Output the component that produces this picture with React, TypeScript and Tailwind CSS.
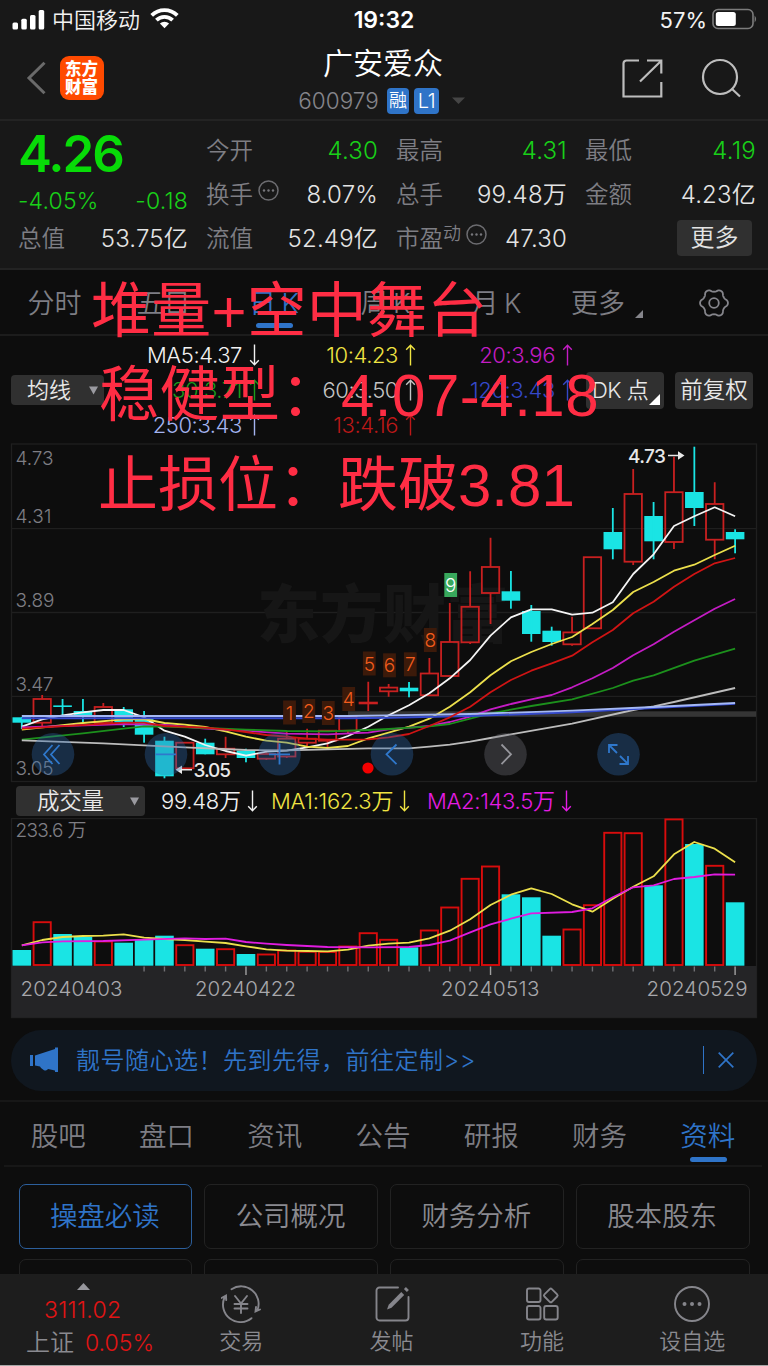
import React from "react";

type Row = [number, number, number, number, number];

/* kind (1 rise, 0 fall), body top, body bottom, wick top, wick bottom */
const candles: Row[] = [
  [0, 717.3, 722.7, 717, 729],
  [1, 699, 722.7, 695, 726],
  [0, 705.4, 707, 699, 717],
  [0, 711, 717, 699, 722.7],
  [1, 707, 723, 703, 723],
  [0, 709.3, 722.3, 707, 727],
  [0, 718, 734.7, 711, 742.7],
  [0, 740.7, 776.3, 736.7, 778.3],
  [1, 742.7, 768.3, 742.7, 768.3],
  [0, 742.7, 754.3, 738.7, 754.3],
  [1, 748.7, 754.3, 736.7, 758],
  [0, 750.7, 758, 748.7, 762.3],
  [1, 754, 758.7, 752, 760],
  [1, 738.7, 756.5, 730.7, 758],
  [1, 738.7, 742.7, 728.7, 747.3],
  [1, 730.7, 740.7, 730.7, 747],
  [1, 716.7, 730.7, 716.7, 733],
  [1, 702.6, 703.4, 681.7, 711],
  [1, 687.6, 691.3, 684, 696.7],
  [0, 687.7, 691.3, 682, 697.3],
  [1, 673.5, 695.3, 658, 695],
  [1, 642, 676, 603, 676],
  [1, 606.8, 642.3, 571.3, 644],
  [1, 567, 593, 537.7, 624],
  [0, 591.3, 600.7, 571, 608.7],
  [0, 611, 634, 605, 641.7],
  [0, 630.7, 642, 626.7, 645.7],
  [1, 632.4, 644.3, 616.7, 645.7],
  [1, 557.2, 628.3, 557.2, 628.3],
  [0, 532, 549.3, 508, 559.3],
  [1, 494, 561.7, 469, 565],
  [0, 516, 541.3, 502, 559.3],
  [1, 492.2, 542, 456.7, 549],
  [0, 492, 508, 446.7, 526],
  [1, 504, 539.7, 482.3, 559.3],
  [0, 532, 539.3, 529.3, 553.3],
];

/* kind (1 rise, 0 fall), bar top */
const volumes: [number, number][] = [
  [0, 950], [1, 921.7], [0, 934], [0, 936.7], [1, 941], [0, 942.7], [0, 939.3], [0, 935.7], [1, 944.7],
  [0, 948.7], [1, 948.7], [0, 954], [1, 954], [1, 950], [1, 951.3], [1, 951.5], [1, 946], [1, 932.7],
  [1, 939.3], [0, 947.3], [1, 930], [1, 907], [1, 878.3], [1, 866], [0, 894.3], [0, 897.3], [0, 935.7],
  [1, 929], [1, 904.7], [1, 832.3], [1, 832.7], [0, 885.3], [1, 818.9], [0, 844], [1, 865.3], [0, 902.3],
];

const cx = (i: number) => 21.8 + i * 20.38;
const line = (pts: number[][]) => pts.map(([i, y]) => `${cx(i).toFixed(1)},${y}`).join(" ");
const seq = (ys: number[]) => line(ys.map((y, i) => [i, y]));

const gear = Array.from({ length: 96 }, (_, k) => {
  const a = (k / 96) * Math.PI * 2;
  const c = Math.cos(6 * a);
  const r = 12.6 + 1.35 * Math.sign(c) * Math.pow(Math.abs(c), 0.7);
  return `${(r * Math.cos(a)).toFixed(2)},${(r * Math.sin(a)).toFixed(2)}`;
}).join(" ");

const ma5 = seq([
  726.7, 719.3, 715.3, 712.3, 710, 710, 717.3, 730.7, 736.7, 745, 751, 755.7, 751.7, 750.7, 747.3, 743.3,
  736, 726.7, 715.3, 705.3, 693.3, 678.3, 660, 635.7, 617.3, 609.3, 609.3, 614.7, 612.7, 602.3, 574, 554.3,
  526, 516.3, 507.3, 516.3,
]);
const ma10 = line([
  [0, 729.7], [3, 723], [5, 719.3], [6, 719], [7, 723], [8, 724.7], [9, 727], [10, 731.3], [11, 736.7],
  [12, 740.7], [13, 742.7], [14, 746.7], [15, 748], [16, 746], [17, 738.3], [18, 732.7], [19, 726.7],
  [20, 718.7], [21, 706.7], [22, 692.3], [23, 675.3], [24, 661.3], [25, 652], [26, 644], [27, 637],
  [28, 624], [29, 610], [30, 592], [31, 582], [32, 570.7], [33, 564.7], [34, 555], [35, 545.7],
]);
const ma13 = line([
  [0, 728.7], [5, 722.7], [6, 722.7], [7, 726], [9, 727.7], [10, 729.3], [11, 732], [12, 735], [13, 736.7],
  [14, 738.7], [15, 739.7], [16, 739.7], [17, 739.3], [18, 737.3], [19, 734], [20, 726], [21, 717.3],
  [22, 706.7], [23, 692.3], [24, 680], [25, 670.7], [26, 663.3], [27, 655.7], [28, 642.3], [29, 630],
  [30, 613.3], [31, 601.7], [32, 586.7], [33, 574], [34, 563.3], [35, 558],
]);
const ma20 = line([
  [0, 727.3], [5, 724], [7, 725], [9, 728.7], [11, 730.7], [13, 733.7], [15, 734.3], [17, 732.7], [18, 729.3],
  [20, 726], [21, 722], [22, 716.7], [23, 709.3], [24, 704], [25, 699.3], [26, 695], [27, 687.3], [28, 678.3],
  [29, 668], [30, 655.3], [31, 644.3], [32, 631.7], [33, 620.3], [34, 608.7], [35, 599],
]);
const ma30 = line([
  [0, 739.7], [3, 733.3], [5, 728.7], [6, 726.3], [7, 726.7], [9, 728], [11, 729.7], [13, 731], [15, 731.3],
  [17, 730], [18, 729], [20, 726.3], [21, 724], [22, 718.7], [23, 713.3], [25, 706], [27, 699.3], [29, 688],
  [30, 680.7], [31, 675.3], [33, 660.7], [35, 648.7],
]);
const ma60 = line([
  [0, 740.3], [4, 743.3], [8, 747.3], [11, 750], [13, 750.3], [17, 748.3], [19, 748.3], [20, 746.7],
  [21, 744.7], [22, 741.7], [23, 738], [24, 734.3], [27, 723.7], [30, 710], [31, 706.3], [32, 702], [35, 688],
]);
const ma120 = line([[0, 718.3], [16, 718.3], [18, 717.7], [22, 716], [27, 712.3], [31, 708], [35, 703.8]]);
const ma250 = line([[0, 716], [16, 716], [18, 715.3], [22, 714], [27, 710.7], [31, 707], [35, 703]]);

const volMa1 = seq([
  945.3, 940, 937, 936, 935.7, 934.3, 937.7, 939, 940, 941.7, 943, 946.3, 949.3, 950.7, 951, 951.3, 949.7,
  945.7, 943.7, 942.7, 938.3, 930.7, 919.3, 905, 894.7, 888.3, 894, 904.3, 911.7, 898.7, 886.7, 876.3, 854.3,
  842, 848.7, 862.3,
]);
const volMa2 = line([
  [0, 945.3], [1, 942.3], [2, 941.3], [4, 941], [6, 939.7], [8, 938.3], [9, 939], [10, 938.7], [11, 942],
  [12, 943.7], [13, 945], [15, 947], [17, 947.3], [19, 947], [20, 945], [21, 940.7], [22, 932.3], [23, 924.3],
  [24, 918.7], [25, 913.3], [27, 912], [28, 908.3], [29, 897.3], [30, 887.3], [31, 885.3], [32, 879],
  [33, 877], [34, 874.3], [35, 874.7],
]);

const signals: [string, number, number][] = [
  ["1", 289.5, 712.5], ["2", 308.8, 711], ["3", 328.3, 713], ["4", 348.7, 699], ["5", 369.3, 663.5],
  ["6", 389.5, 665.3], ["7", 410.3, 664.3], ["8", 430.3, 640], ["9", 450.7, 585],
];

function Arrow({ down = false }: { down?: boolean }) {
  return (
    <svg width="11" height="22" viewBox="0 0 11 22" fill="none" stroke="currentColor" strokeWidth="1.4" className="shrink-0">
      {down ? <path d="M5.5 .5v20M1.2 16.2l4.3 4.5 4.3-4.5" /> : <path d="M5.5 21.5v-20M1.2 5.8l4.3-4.5 4.3 4.5" />}
    </svg>
  );
}

function MoreDots() {
  return (
    <svg width="21" height="21" viewBox="0 0 21 21" fill="#77777c" className="shrink-0">
      <circle cx="10.5" cy="10.5" r="9.5" fill="none" stroke="#6c6c70" strokeWidth="1.5" />
      <circle cx="6" cy="10.5" r="1.2" />
      <circle cx="10.5" cy="10.5" r="1.2" />
      <circle cx="15" cy="10.5" r="1.2" />
    </svg>
  );
}

function StatusBar() {
  return (
    <div className="grid h-10 grid-cols-3 items-center text-[22px] leading-none text-[#f2f2f2]">
      <div className="flex items-center pl-3">
        <svg width="33" height="20" viewBox="0 0 33 20" fill="#fff">
          <rect x="0.5" y="12.5" width="5.5" height="7" rx="1.5" />
          <rect x="9.3" y="8.8" width="5.5" height="10.7" rx="1.5" />
          <rect x="18" y="5" width="5.5" height="14.5" rx="1.5" />
          <rect x="26.7" y="0" width="5.5" height="19.5" rx="1.5" />
        </svg>
        <span className="ml-[7px]">中国移动</span>
        <svg width="29" height="21" viewBox="0 0 29 21" fill="none" stroke="#fff" strokeWidth="3.8" className="-mt-[3px] ml-2.5">
          <path d="M1.7 7.4a18.3 18.3 0 0 1 25.6 0" />
          <path d="M6.4 12.2a11.6 11.6 0 0 1 16.2 0" />
          <path d="M14.5 20.3l-4.6-4.7a6.6 6.6 0 0 1 9.2 0z" fill="#fff" stroke="none" />
        </svg>
      </div>
      <div className="text-center text-[23px] font-semibold text-white">19:32</div>
      <div className="flex items-center justify-end pr-[10px]">
        <span className="font-normal">57%</span>
        <svg width="46" height="22" viewBox="0 0 46 22" className="-mt-0.5 ml-[5px]">
          <rect x="1" y="1.5" width="40" height="19" rx="5" fill="none" stroke="#7c7c7c" strokeWidth="1.6" />
          <rect x="3.8" y="4" width="20" height="14" rx="2.5" fill="#fff" />
          <path d="M42.6 7.5q3 3.5 0 7z" fill="#7c7c7c" />
        </svg>
      </div>
    </div>
  );
}

function NavBar() {
  return (
    <div className="flex h-[81px] justify-between border-b-2 border-[#232323]">
      <div className="flex w-[200px] items-start pt-4 pl-[26px]">
        <svg width="20" height="34" viewBox="0 0 20 34" fill="none" stroke="#6a6a6a" strokeWidth="3" className="mt-[5px]">
          <path d="M18.5 1.8L3 17l15.5 15.3" />
        </svg>
        <div className="ml-[13.5px] flex h-11 w-11 flex-col items-center justify-center rounded-[9px] bg-[#ff4a00] text-[16.5px] leading-[18px] font-black text-white">
          <span>东方</span>
          <span>财富</span>
        </div>
      </div>
      <div className="flex flex-col items-center pr-0.5">
        <div className="mt-[7px] text-[30px] leading-[32px] text-white">广安爱众</div>
        <div className="mt-[9px] flex items-center pr-[3px] text-[#85858b]">
          <span className="text-[22.5px] leading-none">600979</span>
          <span className="ml-[8px] flex h-[26px] w-[22.5px] items-center justify-center rounded bg-[#2f74c8] text-[18px] leading-none text-white">融</span>
          <span className="ml-[5px] flex h-[26px] w-[24.5px] items-center justify-center rounded bg-[#2f74c8] text-[20px] leading-none tracking-[-0.5px] text-white">L1</span>
          <svg width="13" height="8" viewBox="0 0 13 8" className="ml-[13px]"><path d="M0 .5h13L6.5 7z" fill="#454545" /></svg>
        </div>
      </div>
      <div className="flex w-[200px] justify-end gap-[38px] pt-[17.5px] pr-[27.5px]">
        <svg width="42" height="42" viewBox="0 0 42 42" fill="none" stroke="#bdbdbd" strokeWidth="2.2">
          <path d="M18 2.5H5.5a3 3 0 0 0-3 3V38.500h37.800V24M26 2.500h14.300v13M40 3L19 23.500" />
        </svg>
        <svg width="40" height="42" viewBox="0 0 40 42" fill="none" stroke="#bdbdbd" strokeWidth="2.2">
          <circle cx="19" cy="19" r="17" />
          <path d="M30.5 30.5l8.5 8" />
        </svg>
      </div>
    </div>
  );
}

function Cell({ label, value, green, tag }: { label: string; value: string; green?: boolean; tag?: React.ReactNode }) {
  return (
    <div className="flex h-11 items-center justify-between leading-none">
      <span className="flex items-center text-[23.5px] text-[#7e7e84]">
        {label}
        {tag}
      </span>
      <span className={green ? "text-[24px] tracking-[0.2px] text-[#18d018]" : "text-[24px] tracking-[0.2px] text-[#e4e4e4]"}>{value}</span>
    </div>
  );
}

function Quote() {
  return (
    <div className="flex h-[149px] gap-[18px] border-b-2 border-[#232323] pt-[8px] pl-[18px]">
      <div className="w-[170px]">
        <div className="h-[50px] text-[51px] leading-[50px] font-semibold tracking-[-2px] text-[#08dc08]">4.26</div>
        <div className="flex h-[38px] items-center justify-between pt-[7px] text-[23px] leading-none tracking-[0.2px] text-[#18d018]">
          <span>-4.05%</span>
          <span>-0.18</span>
        </div>
        <Cell label="总值" value="53.75亿" />
      </div>
      <div className="w-[172px]">
        <Cell label="今开" value="4.30" green />
        <Cell label="换手" value="8.07%" tag={<span className="mb-2.5 ml-[5px]"><MoreDots /></span>} />
        <Cell label="流值" value="52.49亿" />
      </div>
      <div className="w-[171px]">
        <Cell label="最高" value="4.31" green />
        <Cell label="总手" value="99.48万" />
        <Cell label="市盈" value="47.30" tag={<span className="mb-2.5 flex items-center gap-[5px] text-[18px]">动<MoreDots /></span>} />
      </div>
      <div className="w-[171px]">
        <Cell label="最低" value="4.19" green />
        <Cell label="金额" value="4.23亿" />
        <div className="flex h-[42px] items-center justify-end pr-1">
          <span className="flex h-9 w-[75px] items-center justify-center rounded bg-[#303030] text-[24px] leading-none text-[#e4e4e4]">更多</span>
        </div>
      </div>
    </div>
  );
}

function PeriodTabs() {
  return (
    <div className="flex h-[66px] items-center border-b-2 border-[#1c1c1c] pt-[2px] text-center text-[27px] leading-none [word-spacing:-2px] text-[#7e7e84]">
      <span className="w-[109px]">分时</span>
      <span className="w-[109px]">五日</span>
      <span className="flex w-[112px] flex-col items-center pt-[8px] text-[#2f74c8]">
        <span>日 K</span>
        <span className="-mb-1 mt-[6px] h-[5.5px] w-[37px] rounded-full bg-[#2f74c8]" />
      </span>
      <span className="w-[111px]">周 K</span>
      <span className="w-[111px]">月 K</span>
      <span className="flex w-[110px] items-end pl-[19px]">
        更多
        <svg width="8" height="8" viewBox="0 0 8 8" className="mb-[-1px] ml-2.5"><path d="M8 0v8H0z" fill="#85858b" /></svg>
      </span>
      <span className="flex w-[103px] justify-center">
        <svg width="32" height="30" viewBox="-16 -15 32 30" fill="none" stroke="#85858b" strokeWidth="1.8" strokeLinejoin="round">
          <polygon points={gear} />
          <circle r="4.8" />
        </svg>
      </span>
    </div>
  );
}

function Ma({ text, color, down }: { text: string; color: string; down?: boolean }) {
  return (
    <span className={"flex h-[35px] items-center justify-end gap-[7px] " + color}>
      {text}
      <Arrow down={down} />
    </span>
  );
}

function Averages() {
  return (
    <div className="flex h-[108px] items-center text-[22px] leading-none">
      <div className="ml-[11px] flex h-[30px] w-[93px] items-center rounded bg-[#303030] pl-4 text-[#e8e8e8]">
        均线
        <svg width="9" height="9" viewBox="0 0 9 9" className="ml-[18px]"><path d="M0 .5h9L4.5 8.5z" fill="#9a9aa0" /></svg>
      </div>
      <div className="grid grid-cols-[156px_156px_157px] tracking-[-0.4px]">
        <Ma text="MA5:4.37" color="text-[#f2f2f2]" down />
        <Ma text="10:4.23" color="text-[#f0e442]" />
        <Ma text="20:3.96" color="text-[#c41cc4]" />
        <Ma text="30:3.71" color="text-[#1c9c1c]" />
        <Ma text="60:3.50" color="text-[#c4c4c4]" />
        <Ma text="120:3.43" color="text-[#3548c8]" />
        <Ma text="250:3.43" color="text-[#a4b4f0]" />
        <Ma text="13:4.16" color="text-[#bc1818]" />
      </div>
      <div className="ml-[13px] flex h-[37px] w-[78px] items-center rounded bg-[#303030] pl-[6px] text-[#e8e8e8]">
        <span className="whitespace-nowrap tracking-[-0.5px]">DK 点</span>
        <svg width="11" height="11" viewBox="0 0 11 11" className="mt-[18px] ml-px shrink-0"><path d="M11 0v11H0z" fill="#fff" /></svg>
      </div>
      <div className="ml-[11px] flex h-[37px] w-[78px] items-center justify-center rounded bg-[#303030] text-[22.5px] text-[#e8e8e8]">前复权</div>
    </div>
  );
}

function Notes() {
  return (
    <div className="pointer-events-none absolute top-[267px] left-[91px] font-['Liberation_Sans','Noto_Sans_CJK_SC',sans-serif] text-[60px] leading-[90px] font-normal whitespace-nowrap text-[#ff2d44]">
      <div className="h-[84px] tracking-[0.2px]">堆量+空中舞台</div>
      <div className="ml-[8px] h-[90px] tracking-[0.5px]">稳健型：4.07-4.18</div>
      <div className="ml-[7px] h-[90px]">止损位：跌破3.81</div>
    </div>
  );
}

function PriceChart() {
  return (
    <svg width="768" height="341" viewBox="0 443 768 341" className="block shrink-0">
      <g stroke="#1f1f1f" strokeWidth="1.3" fill="none">
        <rect x="11.5" y="444" width="745" height="337.5" />
        <path d="M11.5 528.7h745M11.5 612.5h745M11.5 696.3h745" />
      </g>
      <text x="257" y="637" fontSize="63" fontWeight="900" textLength="252" fill="#161616">东方财富</text>
      <g fontSize="19" fill="#7e7e84">
        <text x="15.5" y="464.5" textLength="38">4.73</text>
        <text x="15.5" y="522.5" textLength="36">4.31</text>
        <text x="15.5" y="606.5" textLength="39">3.89</text>
        <text x="15.5" y="691" textLength="38">3.47</text>
        <text x="15.5" y="775" textLength="38">3.05</text>
      </g>
      {candles.map(([up, top, bottom, high, low], i) =>
        up ? (
          <g key={i} stroke="#c82020" strokeWidth="1.8" fill="none">
            <rect x={cx(i) - 8.7} y={top} width="17.4" height={bottom - top} />
            <path d={`M${cx(i)} ${high}V${top}M${cx(i)} ${bottom}V${low}`} />
          </g>
        ) : (
          <g key={i} fill="#1ae4e4">
            <rect x={cx(i) - 9.3} y={top} width="18.6" height={bottom - top} />
            <rect x={cx(i) - 0.9} y={high} width="1.8" height={low - high} />
          </g>
        ),
      )}
      <rect x="348" y="711.3" width="408" height="5.5" fill="#666" fillOpacity="0.45" />
      <g fill="none" strokeWidth="1.8" strokeLinejoin="round">
        <polyline points={ma5} stroke="#f4f4f4" />
        <polyline points={ma10} stroke="#ece04c" />
        <polyline points={ma20} stroke="#c41cc4" />
        <polyline points={ma30} stroke="#1c901c" />
        <polyline points={ma60} stroke="#bcbcbc" />
        <polyline points={ma120} stroke="#3449cc" strokeWidth="2" />
        <polyline points={ma250} stroke="#a4b8f4" />
        <polyline points={ma13} stroke="#d01414" />
      </g>
      <g fontSize="19" textAnchor="middle">
        {signals.map(([n, x, y]) => (
          <g key={n}>
            <rect x={x - 6.4} y={y - 12} width="12.8" height="24" fill={n === "9" ? "#38a85c" : "#3c1a0a"} />
            <text x={x} y={y + 7} fill={n === "9" ? "#fff" : "#f25c1c"}>{n}</text>
          </g>
        ))}
      </g>
      <g fontSize="19" fill="#e8e8e8" stroke="none" fontWeight="500">
        <text x="628" y="462.5" textLength="38">4.73</text>
        <path d="M668 454.800h10v-3.500l6.500 4.200-6.500 4.200v-3.500h-10z" />
        <text x="193.5" y="777" textLength="37.5">3.05</text>
        <path d="M192 769h-10v-3.500l-6.500 4.200 6.500 4.200v-3.500h10z" />
      </g>
      <circle cx="368" cy="768" r="5.6" fill="#f40000" />
      <g fill="#2c66a8" fillOpacity="0.36">
        <circle cx="53" cy="754.3" r="21.3" />
        <circle cx="166" cy="754.3" r="21.3" />
        <circle cx="279.5" cy="754.3" r="21.3" />
        <circle cx="392" cy="754.3" r="21.3" />
        <circle cx="505.5" cy="754.3" r="21.3" fill="#707078" />
        <circle cx="618.5" cy="754.3" r="21.3" />
      </g>
      <g fill="none" stroke="#2f78cc" strokeWidth="1.8">
        <path d="M52.500 745l-8.500 9.500 8.500 9.500M59.500 745l-8.500 9.500 8.500 9.500" />
        <path d="M155.500 754.300h20.500M269 754.300h21M279.500 743.500v21" />
        <path d="M396.500 744.500l-10 9.800 10 9.800" />
        <path d="M501.500 744.500l9.500 9.800-9.500 9.800" stroke="#96969c" />
        <path d="M609 753v-8h8.500M609.500 745.500l7.500 7.500M628 756v8h-8.500M627.500 763.500l-7.500-7.500" />
      </g>
    </svg>
  );
}

function VolumeHeader() {
  return (
    <div className="flex h-[34px] items-center text-[22px] leading-none tracking-[-0.3px]">
      <div className="ml-[16px] flex h-[30px] w-[129px] items-center justify-between rounded bg-[#303030] pr-1.5 pl-[21px] text-[22.5px] text-[#e8e8e8]">
        成交量
        <svg width="9" height="9" viewBox="0 0 9 9"><path d="M0 .5h9L4.5 8.500z" fill="#9a9aa0" /></svg>
      </div>
      <span className="ml-4 flex w-[110px] items-center gap-[6px] text-[#f0f0f0]">99.48万<Arrow down /></span>
      <span className="flex w-[156px] items-center gap-[6px] text-[#f0e442]">MA1:162.3万<Arrow down /></span>
      <span className="flex items-center gap-[6px] text-[#e41ce4]">MA2:143.5万<Arrow down /></span>
    </div>
  );
}

function VolumeChart() {
  return (
    <svg width="768" height="201" viewBox="0 818 768 201" className="block shrink-0">
      <rect x="11.5" y="818.6" width="745" height="199" stroke="#1f1f1f" strokeWidth="1.3" fill="none" />
      <rect x="11.5" y="966" width="745" height="51.5" fill="#242426" />
      <text x="15.5" y="836.5" fontSize="19" textLength="71" fill="#7e7e84">233.6 万</text>
      {volumes.map(([up, y], i) =>
        up ? (
          <rect key={i} x={cx(i) - 8.6} y={y + 0.5} width="17.2" height={965 - y - 0.5} fill="none" stroke="#d80c0c" strokeWidth="1.9" />
        ) : (
          <rect key={i} x={cx(i) - 9.3} y={y} width="18.6" height={965.7 - y} fill="#1ae4e4" />
        ),
      )}
      <g fill="none" strokeWidth="1.8" strokeLinejoin="round">
        <polyline points={volMa1} stroke="#ece04c" />
        <polyline points={volMa2} stroke="#e01ce0" />
      </g>
      {volumes.map((_, i) =>
        i < 6 ? null : (
          <rect key={i} x={cx(i) - 0.7} y="966.5" width="1.4" height={i % 12 === 11 ? 8.5 : 5} fill={i % 12 === 11 ? "#a0a0a0" : "#707074"} />
        ),
      )}
      <g fontSize="20.5" fill="#a8a8ac">
        <text x="20.5" y="995.5" textLength="102">20240403</text>
        <text x="195" y="995.5" textLength="101">20240422</text>
        <text x="441" y="995.5" textLength="98.5">20240513</text>
        <text x="646.5" y="995.5" textLength="101">20240529</text>
      </g>
    </svg>
  );
}

function Banner() {
  return (
    <div className="h-[83px] shrink-0 border-b-2 border-[#171717] pt-[10.5px]">
      <div className="mx-[11px] flex h-[61px] items-center rounded-full bg-[#10171f] pl-[19px] text-[24px] leading-none text-[#2f74c8]">
        <svg width="29" height="26" viewBox="0 0 29 26" fill="#2f74c8">
          <rect x="0" y="8" width="3" height="11" />
          <path d="M5 8.5L25 2V.5h3V25h-3v-1.500L18 22q-1 2-4 1.200l-3-2.200L10 19.500 5 18.500z" />
        </svg>
        <span className="ml-[17px] grow pt-px tracking-[0.5px] whitespace-nowrap">靓号随心选！先到先得，前往定制&gt;&gt;</span>
        <span className="h-7 w-[1.5px] bg-[#2f74c8]" />
        <svg width="16" height="16" viewBox="0 0 16 16" fill="none" stroke="#2f74c8" strokeWidth="1.7" className="mr-[23px] ml-[14px]">
          <path d="M.7.7l14.600 14.600M15.300.7L.7 15.300" />
        </svg>
      </div>
    </div>
  );
}

const sections = ["股吧", "盘口", "资讯", "公告", "研报", "财务", "资料"];

function SectionTabs() {
  return (
    <div className="mr-[6px] ml-[4px] grid h-[65px] shrink-0 grid-cols-7 border-b-2 border-[#171717] text-[27.5px] leading-none text-[#7e7e84]">
      {sections.map((s) => (
        <span key={s} className={s === "资料" ? "flex flex-col items-center pt-[21px] text-[#2f74c8]" : "flex flex-col items-center pt-[21px]"}>
          {s}
          {s === "资料" && <span className="mt-[6px] ml-[2px] h-[5.5px] w-[37px] rounded-full bg-[#2f74c8]" />}
        </span>
      ))}
    </div>
  );
}

function Topics() {
  const box = "h-[65px] rounded-[7px] border border-[#222] flex items-center justify-center pr-px";
  return (
    <div className="grid h-[107px] shrink-0 grid-cols-4 content-start gap-x-3 gap-y-[10px] overflow-hidden px-[18.5px] pt-[17px] text-[27.5px] leading-none text-[#8a8a90]">
      <div className="flex h-[65px] items-center justify-center rounded-[7px] border border-[#2c5f9c] pr-px text-[#2f74c8]">操盘必读</div>
      <div className={box}>公司概况</div>
      <div className={box}>财务分析</div>
      <div className={box}>股本股东</div>
      <div className={box} />
      <div className={box} />
      <div className={box} />
      <div className={box} />
    </div>
  );
}

function Action({ label, children }: { label: string; children: React.ReactNode }) {
  return (
    <div className="flex w-[150.4px] flex-col items-center pt-[11px]">
      <svg width="40" height="38" viewBox="-20 -19 40 38" fill="none" stroke="#85858b" strokeWidth="1.9" strokeLinecap="round">
        {children}
      </svg>
      <span className="mt-[7px] text-[22px] leading-none">{label}</span>
    </div>
  );
}

function BottomBar() {
  return (
    <div className="flex h-[92px] shrink-0 border-b border-[#a8a8a8] bg-[#1d1d1d] text-[#8a8a90]">
      <div className="flex w-[166px] flex-col text-[#e01414]">
        <svg width="13" height="7" viewBox="0 0 13 7" className="mt-[9px] ml-[77px]"><path d="M0 7h13L6.500 0z" fill="#97979c" /></svg>
        <span className="mt-[9px] pl-[44px] text-[23px] leading-none tracking-[0.3px]">3111.02</span>
        <span className="mt-[9px] flex items-center pl-[26px] text-[24px] leading-none">
          <span className="mr-[11px] text-[#8a8a90]">上证</span>
          <span className="text-[23px]">0.05%</span>
        </span>
      </div>
      <Action label="交易">
        <path d="M-9.500-14.800A17.500 17.500 0 0 1 16.500 6M10.500 14.200A17.500 17.500 0 0 1-16.500-6.500M19 5.500l-4.500 2 .5-4.500M-19.500-6l4.500-2.500.2 4.500" />
        <path d="M-6-8l6 7.500L6-8M0-.5V9M-6.500 0h13M-6.500 4.500h13" />
      </Action>
      <Action label="发帖">
        <path d="M6-16.500H-12.500a3 3 0 0 0-3 3v27a3 3 0 0 0 3 3h26a3 3 0 0 0 3-3V-7" />
        <path d="M-5 5.500L-3.300 .800 9.300-11.900 12.200-9-.5 3.700z" fill="#85858b" stroke="none" />
        <path d="M13.400-13.500l2-2" strokeWidth="4.200" strokeLinecap="butt" />
      </Action>
      <Action label="功能">
        <rect x="-15" y="-15.500" width="13.500" height="13.500" rx="2" />
        <rect x="-15" y="2" width="13.500" height="13.500" rx="2" />
        <rect x="2.200" y="2" width="13.500" height="13.500" rx="2" />
        <rect x="3.500" y="-13.800" width="10.500" height="10.500" rx="1.500" transform="rotate(45 8.750 -8.500)" />
      </Action>
      <Action label="设自选">
        <circle r="17" />
        <path d="M-7.500 0h.01M0 0h.01M7.500 0h.01" strokeWidth="4" />
      </Action>
    </div>
  );
}

export default function App() {
  return (
    <div className="relative flex h-[1366px] w-[768px] flex-col overflow-hidden bg-[#0d0d0d] font-['Inter','Noto_Sans_CJK_SC',sans-serif] font-[350]">
      <div className="h-[270px] shrink-0 bg-[#181818]">
        <StatusBar />
        <NavBar />
        <Quote />
      </div>
      <div className="h-[66px] shrink-0"><PeriodTabs /></div>
      <div className="-mb-px h-[108px] shrink-0"><Averages /></div>
      <PriceChart />
      <div className="h-[34px] shrink-0"><VolumeHeader /></div>
      <VolumeChart />
      <Banner />
      <SectionTabs />
      <Topics />
      <BottomBar />
      <Notes />
    </div>
  );
}
